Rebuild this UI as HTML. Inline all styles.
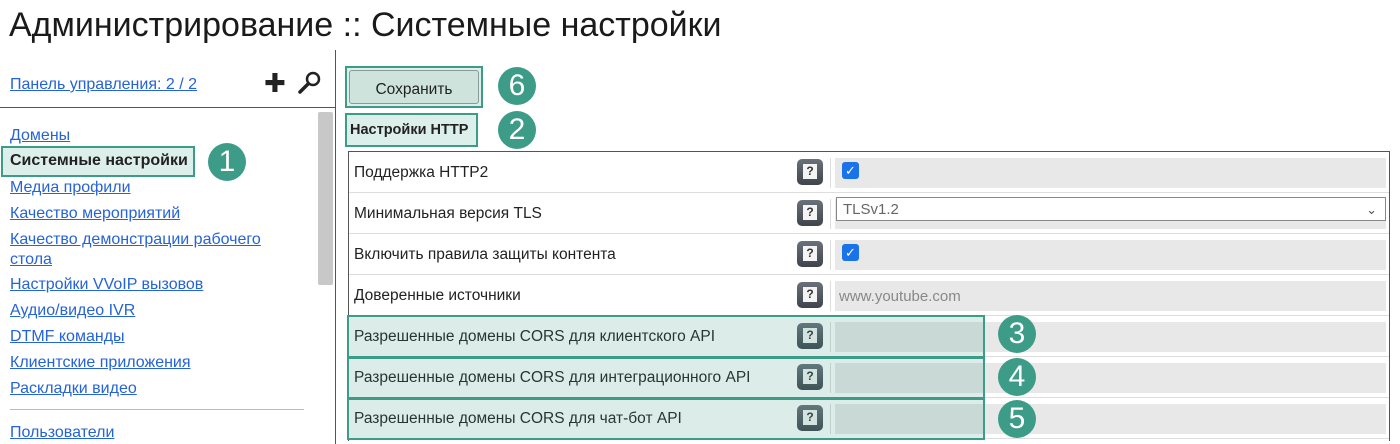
<!DOCTYPE html>
<html><head><meta charset="utf-8"><style>
*{margin:0;padding:0;box-sizing:border-box}
body{width:1400px;height:444px;overflow:hidden;background:#fff;font-family:"Liberation Sans","DejaVu Sans",sans-serif;color:#222;position:relative}
.a{position:absolute}
h1{position:absolute;left:9px;top:6px;font-size:34px;font-weight:normal;color:#1a1a1a;white-space:nowrap}
.lnk{position:absolute;left:10px;font-size:16px;color:#2563d8;text-decoration:underline;white-space:nowrap}
.circ{position:absolute;width:38px;height:38px;border-radius:50%;background:#3d9c87;color:#fff;font-size:30px;text-align:center;line-height:38px}
.row{position:absolute;left:349px;width:1040px;height:41px;border-bottom:1px solid #ddd}
.lbl{position:absolute;left:5px;top:12px;font-size:15.5px;white-space:nowrap;color:#222}
.help{position:absolute;left:448px;top:7px;width:26px;height:26px;border-radius:5px;background:linear-gradient(#6b717b,#3f444c)}
.help i{position:absolute;left:6px;top:5px;width:14px;height:15px;background:#f4f4f4;font-style:normal;font-weight:bold;font-size:12px;text-align:center;line-height:15px;color:#333}
.sep{position:absolute;left:481px;top:6px;width:1px;height:30px;background:#ddd}
.fld{position:absolute;left:486px;top:6px;width:551px;height:30px;background:#e8e8e8}
.cb{position:absolute;left:493px;top:10px;width:17px;height:17px;border-radius:3px;background:#1a73e8;color:#fff;font-size:13px;line-height:17px;text-align:center;font-weight:bold}
.hl{position:absolute;border:2px solid #3d9c87;background:rgba(61,156,135,0.18)}
</style></head><body>
<h1>Администрирование :: Системные настройки</h1>
<div class="a" style="left:335px;top:50px;width:1px;height:394px;background:#555"></div>
<div class="a" style="left:0;top:107px;width:335px;height:1px;background:#555"></div>
<div class="lnk" style="top:76px">Панель управления: 2 / 2</div>
<div class="a" style="left:264px;top:73px;font-size:26px;font-weight:bold;color:#222;line-height:20px">✚</div>
<svg class="a" style="left:297px;top:70px" width="26" height="26"><circle cx="16" cy="9" r="6" fill="none" stroke="#222" stroke-width="2.5"/><line x1="11" y1="14" x2="3" y2="22" stroke="#222" stroke-width="3.5" stroke-linecap="round"/></svg>
<div class="a" style="left:318px;top:112px;width:15px;height:173px;background:#c8c8c8;border-radius:2px"></div>
<div class="lnk" style="top:127px">Домены</div>
<div class="a" style="left:1px;top:146px;width:194px;height:31px;border:2px solid #3d9c87;background:#dcefea"></div>
<div class="a" style="left:10px;top:152px;font-size:16px;font-weight:bold;color:#222">Системные настройки</div>
<div class="circ" style="left:208px;top:143px">1</div>
<div class="lnk" style="top:179px">Медиа профили</div>
<div class="lnk" style="top:205px">Качество мероприятий</div>
<div class="lnk" style="top:231px">Качество демонстрации рабочего</div>
<div class="lnk" style="top:251px">стола</div>
<div class="lnk" style="top:276px">Настройки VVoIP вызовов</div>
<div class="lnk" style="top:302px">Аудио/видео IVR</div>
<div class="lnk" style="top:328px">DTMF команды</div>
<div class="lnk" style="top:354px">Клиентские приложения</div>
<div class="lnk" style="top:380px">Раскладки видео</div>
<div class="a" style="left:10px;top:409px;width:294px;height:1px;background:#bbb"></div>
<div class="lnk" style="top:424px">Пользователи</div>

<div class="a" style="left:345px;top:66px;width:138px;height:42px;border:2px solid #3d9c87;background:#dcefea"></div>
<div class="a" style="left:349px;top:70px;width:130px;height:34px;border:1px solid #8a9a96;border-radius:3px;background:#cfe3dd;font-size:15.5px;text-align:center;line-height:38px;color:#222">Сохранить</div>
<div class="circ" style="left:498px;top:67px">6</div>
<div class="a" style="left:345px;top:113px;width:133px;height:34px;border:2px solid #3d9c87;background:#dcefea;font-size:14.5px;font-weight:bold;line-height:30px;padding-left:3px;color:#222">Настройки HTTP</div>
<div class="circ" style="left:498px;top:111px">2</div>

<div class="a" style="left:348px;top:151px;width:1042px;height:290px;border:1px solid #555;border-bottom:none"></div>
<div class="row" style="top:152px"><div class="lbl">Поддержка HTTP2</div><div class="help"><i>?</i></div><div class="sep"></div><div class="fld"></div><div class="cb">✓</div></div>
<div class="row" style="top:193px"><div class="lbl">Минимальная версия TLS</div><div class="help"><i>?</i></div><div class="sep"></div><div class="fld"></div><div class="a" style="left:487px;top:4px;width:550px;height:24px;background:#fff;border:1px solid #888;font-size:15px;color:#666;padding-left:6px;line-height:24px">TLSv1.2<span style="position:absolute;right:8px;top:0;font-size:13px;color:#555">&#8964;</span></div></div>
<div class="row" style="top:234px"><div class="lbl">Включить правила защиты контента</div><div class="help"><i>?</i></div><div class="sep"></div><div class="fld"></div><div class="cb">✓</div></div>
<div class="row" style="top:275px"><div class="lbl">Доверенные источники</div><div class="help"><i>?</i></div><div class="sep"></div><div class="fld"></div><div class="a" style="left:490px;top:13px;font-size:15px;color:#888">www.youtube.com</div></div>
<div class="row" style="top:316px"><div class="lbl">Разрешенные домены CORS для клиентского API</div><div class="help"><i>?</i></div><div class="sep"></div><div class="fld"></div></div>
<div class="row" style="top:357px"><div class="lbl">Разрешенные домены CORS для интеграционного API</div><div class="help"><i>?</i></div><div class="sep"></div><div class="fld"></div></div>
<div class="row" style="top:398px"><div class="lbl">Разрешенные домены CORS для чат-бот API</div><div class="help"><i>?</i></div><div class="sep"></div><div class="fld"></div></div>
<div class="hl" style="left:347px;top:315px;width:638px;height:43px"></div>
<div class="hl" style="left:347px;top:357px;width:638px;height:42px"></div>
<div class="hl" style="left:347px;top:398px;width:638px;height:42px"></div>
<div class="circ" style="left:998px;top:315px">3</div>
<div class="circ" style="left:998px;top:358px">4</div>
<div class="circ" style="left:998px;top:400px">5</div>
</body></html>
